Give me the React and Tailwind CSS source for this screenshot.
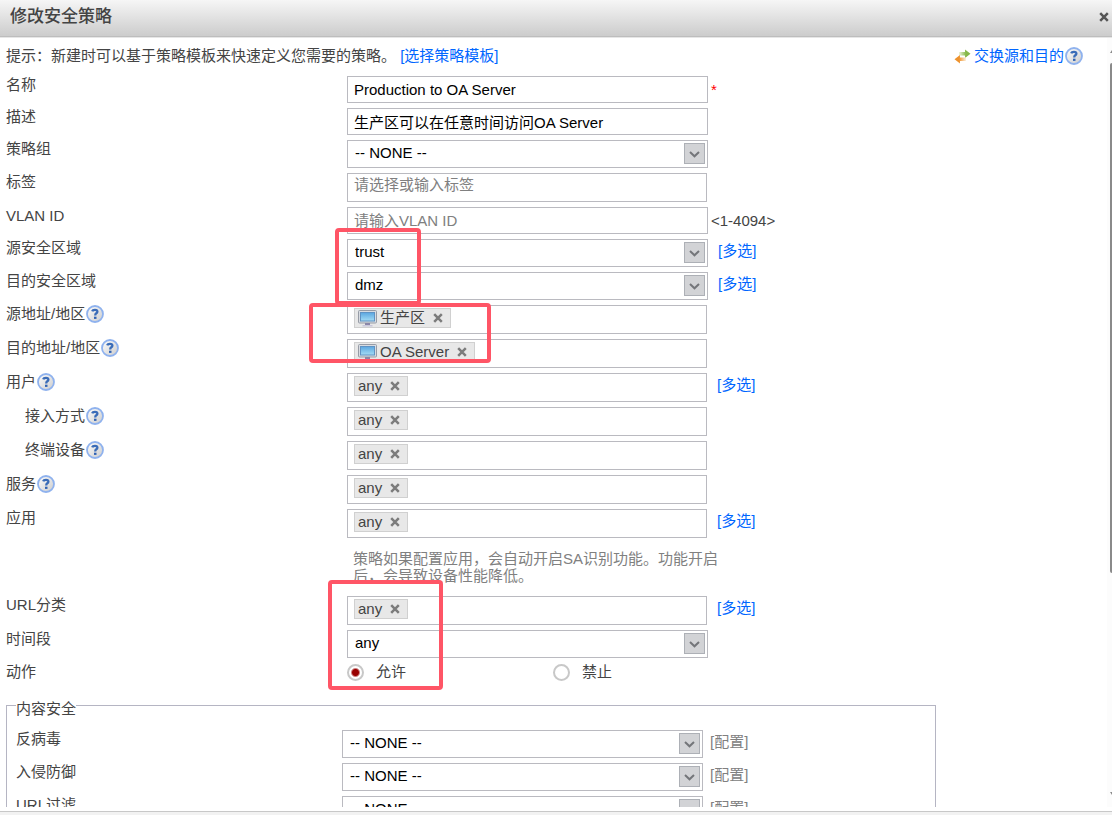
import React, { useState } from 'react';

const NONE = '-- NONE --';

const HelpIcon = () => (
  <svg width="18" height="18" viewBox="0 0 18 18" className="shrink-0" aria-hidden="true">
    <defs>
      <linearGradient id="help-fill" x1="0" y1="0" x2="1" y2="1">
        <stop offset="0" stopColor="#ffffff" />
        <stop offset="1" stopColor="#cbcbcb" />
      </linearGradient>
    </defs>
    <circle cx="9" cy="9" r="8" fill="url(#help-fill)" stroke="#8fb2ee" strokeWidth="1.8" />
    <path
      d="M6.2 6.4Q6.6 4.8 9 4.8Q11.4 4.8 11.4 6.7Q11.4 7.8 10.2 8.4Q9.2 8.9 9.2 10.4"
      fill="none"
      stroke="#3a6cb8"
      strokeWidth="2.3"
    />
    <rect x="8" y="11.7" width="2.5" height="2.2" fill="#2f62b4" />
  </svg>
);

const SwapIcon = () => (
  <svg width="17" height="15" viewBox="0 0 17 15" className="shrink-0" aria-hidden="true">
    <defs>
      <linearGradient id="swap-green" x1="0" y1="0" x2="1" y2="0">
        <stop offset="0" stopColor="#eef4dc" />
        <stop offset="0.6" stopColor="#86b84a" />
      </linearGradient>
      <linearGradient id="swap-orange" x1="1" y1="0" x2="0" y2="0">
        <stop offset="0" stopColor="#fdf0dc" />
        <stop offset="0.6" stopColor="#ee922c" />
      </linearGradient>
    </defs>
    <path d="M5 3H11V0.5L16.5 4.8L11 9V6.6H5Z" fill="url(#swap-green)" />
    <path d="M12 8.4H6V6L0.5 10.2L6 14.5V12H12Z" fill="url(#swap-orange)" />
  </svg>
);

const MonitorIcon = () => (
  <svg width="19" height="17" viewBox="0 0 19 17" className="shrink-0" aria-hidden="true">
    <defs>
      <linearGradient id="screen-fill" x1="0" y1="0" x2="0" y2="1">
        <stop offset="0" stopColor="#5aa6e0" />
        <stop offset="1" stopColor="#a4dcf4" />
      </linearGradient>
    </defs>
    <rect x="0.5" y="0.5" width="18" height="12.5" rx="1" fill="#d8dce2" stroke="#979ca6" />
    <rect x="2.5" y="2.5" width="14" height="8.5" fill="url(#screen-fill)" stroke="#5f93c4" />
    <path d="M7 13H12V15H7Z" fill="#8b87a8" />
    <path d="M4.5 15H14.5V16.5H4.5Z" fill="#c9c6da" />
  </svg>
);

const CrossIcon = ({ color }) => (
  <svg width="10" height="10" viewBox="0 0 10 10" className="shrink-0" aria-hidden="true">
    <path d="M1.2 1.2L8.8 8.8M8.8 1.2L1.2 8.8" stroke={color} strokeWidth="2.5" />
  </svg>
);

const Row = ({ label, id, help, indent, inner, children }) => (
  <div className="flex items-start">
    <div className={inner ? 'w-[326px] shrink-0' : 'w-[341px] shrink-0'}>
      <div className={indent ? 'flex h-[18px] pl-[19px]' : 'flex h-[18px]'}>
        <label htmlFor={id}>{label}</label>
        {help && (
          <button type="button" aria-label="help" className="ml-px h-[18px]">
            <HelpIcon />
          </button>
        )}
      </div>
    </div>
    {children}
  </div>
);

const TextInput = ({ id, value, placeholder }) => (
  <input
    id={id}
    type="text"
    defaultValue={value}
    placeholder={placeholder}
    className="h-[27px] w-[361px] border border-[#babac0] bg-white px-1.5 text-black outline-none placeholder:text-[#808080]"
  />
);

const SelectBox = ({ id, options }) => (
  <div className="relative w-[361px]">
    <select
      id={id}
      className="block h-7 w-full appearance-none border border-[#babac0] bg-white pr-7 pb-0.5 pl-[7px] text-black outline-none"
    >
      {options.map((o) => (
        <option key={o}>{o}</option>
      ))}
    </select>
    <div className="pointer-events-none absolute top-[3px] right-[3px] flex size-[21px] items-center justify-center border border-[#adb0b6] bg-[#d2d3d6] pt-px">
      <svg width="11" height="7" viewBox="0 0 11 7" aria-hidden="true">
        <path d="M1 1L5.5 5.3L10 1" fill="none" stroke="#74767a" strokeWidth="2" />
      </svg>
    </div>
  </div>
);

const TagBox = ({ id, tag, monitor }) => {
  const [tags, setTags] = useState([tag]);

  return (
    <div className="flex h-[29px] w-[360px] items-start border border-[#babac0] bg-white px-1.5 pt-0.5">
      {tags.map((t) => (
        <span
          key={t}
          className="flex h-5 shrink-0 items-center border border-[#d0d0d0] bg-[#e8e8e8] pr-[7px] pl-[3px] leading-[18px]"
        >
          {monitor && (
            <span className="mr-[3px]">
              <MonitorIcon />
            </span>
          )}
          {t}
          <button type="button" aria-label={t} onClick={() => setTags([])} className="ml-2">
            <CrossIcon color="#7c7c7c" />
          </button>
        </span>
      ))}
      <input id={id} type="text" className="h-5 min-w-0 flex-1 outline-none" />
    </div>
  );
};

const MultiLink = () => (
  <a href="#multi" className="ml-2.5 leading-[23px] text-[#0066ff]">
    [多选]
  </a>
);

const security = ['反病毒', '入侵防御', 'URL过滤'];

const App = () => {
  const [action, setAction] = useState('permit');

  const radioClass =
    'size-[17px] shrink-0 appearance-none rounded-full border-2 border-[#c8c8c8] bg-white checked:bg-[radial-gradient(circle,#990000_0_3px,#ffffff_5px)]';

  return (
    <div className="flex h-screen flex-col overflow-hidden bg-white font-['Liberation_Sans','Noto_Sans_CJK_SC',sans-serif] text-[15px] leading-[18px] text-[#444444]">
      {/* Title bar */}
      <header className="flex h-[38px] shrink-0 items-center justify-between border-b border-[#e6e6e6] bg-linear-to-b from-[#f6f6f6] to-[#cbcbcb] pr-[3px] pb-1 pl-2.5 shadow-[inset_0_-1px_0_#bdbdbd]">
        <h1 className="text-[17px] font-medium">修改安全策略</h1>
        <button type="button" aria-label="close">
          <CrossIcon color="#555555" />
        </button>
      </header>

      <div className="flex min-h-0 flex-1">
        <form className="relative min-w-0 flex-1 overflow-hidden pt-[9px] pl-1.5">
          <div className="mb-[11px] flex justify-between pr-6">
            <p>
              提示：新建时可以基于策略模板来快速定义您需要的策略。{' '}
              <a href="#template" className="text-[#0066ff]">
                [选择策略模板]
              </a>
            </p>
            <div className="flex h-[18px] items-center">
              <SwapIcon />
              <a href="#swap" className="mr-px ml-[3px] text-[#0066ff]">
                交换源和目的
              </a>
              <button type="button" aria-label="help">
                <HelpIcon />
              </button>
            </div>
          </div>

          <div className="flex flex-col gap-[5px]">
            <Row label="名称" id="name">
              <TextInput id="name" value="Production to OA Server" />
              <span className="ml-[3px] leading-[27px] text-[#ff0000]">*</span>
            </Row>
            <Row label="描述" id="desc">
              <TextInput id="desc" value="生产区可以在任意时间访问OA Server" />
            </Row>
            <Row label="策略组" id="group">
              <SelectBox id="group" options={[NONE]} />
            </Row>
            <Row label="标签" id="label">
              <input
                id="label"
                type="text"
                placeholder="请选择或输入标签"
                className="h-[29px] w-[360px] border border-[#babac0] bg-white px-1.5 pb-1.5 outline-none placeholder:text-[#808080]"
              />
            </Row>
            <Row label="VLAN ID" id="vlan">
              <TextInput id="vlan" placeholder="请输入VLAN ID" />
              <span className="ml-[3px] leading-[27px]">&lt;1-4094&gt;</span>
            </Row>
            <Row label="源安全区域" id="src-zone">
              <SelectBox id="src-zone" options={['trust', 'dmz']} />
              <MultiLink />
            </Row>
            <Row label="目的安全区域" id="dst-zone">
              <SelectBox id="dst-zone" options={['dmz', 'trust']} />
              <MultiLink />
            </Row>
            <Row label="源地址/地区" id="src-addr" help>
              <TagBox id="src-addr" tag="生产区" monitor />
            </Row>
            <Row label="目的地址/地区" id="dst-addr" help>
              <TagBox id="dst-addr" tag="OA Server" monitor />
            </Row>
            <Row label="用户" id="user" help>
              <TagBox id="user" tag="any" />
              <MultiLink />
            </Row>
            <Row label="接入方式" id="access" help indent>
              <TagBox id="access" tag="any" />
            </Row>
            <Row label="终端设备" id="device" help indent>
              <TagBox id="device" tag="any" />
            </Row>
            <Row label="服务" id="service" help>
              <TagBox id="service" tag="any" />
            </Row>
            <Row label="应用" id="app">
              <TagBox id="app" tag="any" />
              <MultiLink />
            </Row>
            <p className="ml-[347px] w-[372px] py-[7px] leading-[17px] text-[#808080]">
              策略如果配置应用，会自动开启SA识别功能。功能开启后，会导致设备性能降低。
            </p>
            <Row label="URL分类" id="url">
              <TagBox id="url" tag="any" />
              <MultiLink />
            </Row>
            <Row label="时间段" id="time">
              <SelectBox id="time" options={['any']} />
            </Row>
            <Row label="动作" id="permit">
              <label className="flex w-[206px] items-center gap-3">
                <input
                  id="permit"
                  type="radio"
                  name="action"
                  checked={action === 'permit'}
                  onChange={() => setAction('permit')}
                  className={radioClass}
                />
                允许
              </label>
              <label className="flex items-center gap-3">
                <input
                  type="radio"
                  name="action"
                  checked={action === 'deny'}
                  onChange={() => setAction('deny')}
                  className={radioClass}
                />
                禁止
              </label>
            </Row>
          </div>

          {/* Content security */}
          <fieldset className="mt-[11px] w-[930px] max-w-full border border-[#b5b5c3] px-[9px] pb-3">
            <legend className="pt-2">内容安全</legend>
            <div className="flex flex-col gap-[5px] pt-3">
              {security.map((name) => (
                <Row key={name} label={name} id={name} inner>
                  <SelectBox id={name} options={[NONE]} />
                  <a href="#config" className="ml-[7px] leading-[23px] text-[#808080]">
                    [配置]
                  </a>
                </Row>
              ))}
            </div>
          </fieldset>

          {/* Highlight marks */}
          <div className="pointer-events-none absolute top-[190px] left-[335px] h-[77px] w-[86px] rounded-[4px] border-4 border-[#ff5566]" />
          <div className="pointer-events-none absolute top-[265px] left-[309px] h-[60px] w-[182px] rounded-[4px] border-4 border-[#ff5566]" />
          <div className="pointer-events-none absolute top-[542px] left-[328px] h-[110px] w-[115px] rounded-[4px] border-4 border-[#ff5566]" />
        </form>

        {/* Scroll bar */}
        <div className="flex w-[5px] shrink-0 flex-col items-end bg-[#fcfcfc] py-3">
          <svg width="2" height="3" viewBox="0 0 2 3" aria-hidden="true">
            <path d="M0 3L2 0V3Z" fill="#8a8a8a" />
          </svg>
          <div className="mt-2.5 w-0.5 flex-[7] rounded-l-full bg-[#8a8a8a]" />
          <div className="flex-[3]" />
          <svg width="2" height="3" viewBox="0 0 2 3" aria-hidden="true">
            <path d="M0 0H2V3Z" fill="#8a8a8a" />
          </svg>
        </div>
      </div>

      <footer className="mt-1 h-1 shrink-0 border-t border-[#c8c8c8] bg-[#f2f2f2]" />
    </div>
  );
};

export default App;
